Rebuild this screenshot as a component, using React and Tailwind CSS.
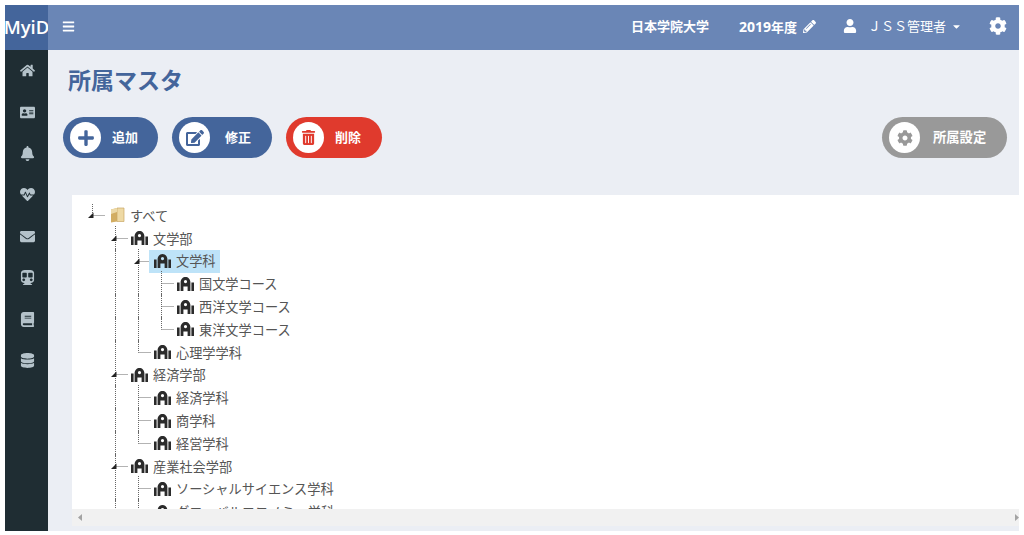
import {
  FaHome, FaAddressCard, FaBell, FaHeartbeat, FaEnvelope, FaSubway, FaBook, FaDatabase,
  FaBars, FaPencilAlt, FaUser, FaCaretDown, FaCog, FaPlus, FaEdit, FaTrashAlt,
} from 'react-icons/fa';

const sideIcons = [FaHome, FaAddressCard, FaBell, FaHeartbeat, FaEnvelope, FaSubway, FaBook, FaDatabase];

// guides: b = blank, p = vertical line. type: open / root / tee / last
const treeRows = [
  { label: 'すべて', guides: [], type: 'root', folder: true },
  { label: '文学部', guides: ['b'], type: 'open' },
  { label: '文学科', guides: ['b', 'p'], type: 'open', selected: true },
  { label: '国文学コース', guides: ['b', 'p', 'p'], type: 'tee' },
  { label: '西洋文学コース', guides: ['b', 'p', 'p'], type: 'tee' },
  { label: '東洋文学コース', guides: ['b', 'p', 'p'], type: 'last' },
  { label: '心理学学科', guides: ['b', 'p'], type: 'last' },
  { label: '経済学部', guides: ['b'], type: 'open' },
  { label: '経済学科', guides: ['b', 'p'], type: 'tee' },
  { label: '商学科', guides: ['b', 'p'], type: 'tee' },
  { label: '経営学科', guides: ['b', 'p'], type: 'last' },
  { label: '産業社会学部', guides: ['b'], type: 'open' },
  { label: 'ソーシャルサイエンス学科', guides: ['b', 'p'], type: 'tee' },
  { label: 'グローバルエコノミー学科', guides: ['b', 'p'], type: 'tee' },
];

function Connector({ type }) {
  const dots = { stroke: '#666', strokeWidth: 1, strokeDasharray: '1 1' };
  return (
    <svg width="23" height="23" className="shrink-0 overflow-visible">
      {type === 'p' && <line x1="8.5" y1="-1" x2="8.5" y2="24" {...dots} />}
      {type === 'tee' && <line x1="8.5" y1="-1" x2="8.5" y2="24" {...dots} />}
      {type === 'last' && <line x1="8.5" y1="-1" x2="8.5" y2="11.5" {...dots} />}
      {type === 'open' && <line x1="8.5" y1="-1" x2="8.5" y2="24" {...dots} />}
      {type === 'root' && <line x1="8.5" y1="0" x2="8.5" y2="11.5" {...dots} />}
      {type !== 'b' && type !== 'p' && <line x1="8.5" y1="11.5" x2="21" y2="11.5" {...dots} />}
      {(type === 'open' || type === 'root') && <path d="M4 14 L9.5 8.5 V14 Z" fill="#222" />}
    </svg>
  );
}

function BuildingIcon() {
  return (
    <svg width="17" height="14" viewBox="0 0 17 14" className="shrink-0">
      <rect x="0" y="5.5" width="2.6" height="8.5" fill="#2b2b2b" />
      <rect x="14.4" y="5.5" width="2.6" height="8.5" fill="#2b2b2b" />
      <path
        fillRule="evenodd"
        d="M3.6 14 V5.5 C3.6 2 6 0 8.5 0 C11 0 13.4 2 13.4 5.5 V14 H10.6 V9.5 H6.4 V14 Z M8.5 3 A1.6 1.6 0 1 0 8.5 6.2 A1.6 1.6 0 1 0 8.5 3 Z"
        fill="#2b2b2b"
      />
    </svg>
  );
}

function FolderIcon() {
  return (
    <svg width="17" height="16" viewBox="0 0 17 16" className="shrink-0">
      <path d="M3 2.5 L9 1 V14.5 L3 15.5 Z" fill="#d2ad62" />
      <path d="M9 1 H16 V14.5 H9 Z" fill="#eed9a4" stroke="#c9a865" strokeWidth="0.7" />
      <path d="M3 2.5 L9 1 V5 L3 7 Z" fill="#ecd9a8" />
    </svg>
  );
}

function TreeRow({ row }) {
  return (
    <div className="flex items-center h-[22.8px] shrink-0">
      {row.guides.map((g, i) => (
        <Connector key={i} type={g} />
      ))}
      <Connector type={row.type} />
      <div className={`flex items-center h-[23px] pr-1 ${row.selected ? 'bg-[#bee3f8] -ml-[4px] pl-[5px]' : 'pl-px'}`}>
        {row.folder ? <FolderIcon /> : <BuildingIcon />}
        <span className="ml-[5px] text-[13.2px] leading-none text-[#555] whitespace-nowrap">{row.label}</span>
      </div>
    </div>
  );
}

function PillButton({ icon: Icon, label, bg, fg, width, gap, iconSize, textSize = 'text-[13px]' }) {
  return (
    <button className={`flex items-center h-[41px] rounded-full pl-[7px] ${bg} ${width}`}>
      <span className={`flex items-center justify-center w-[31px] h-[31px] rounded-full bg-white ${fg}`}>
        <Icon size={iconSize} />
      </span>
      <span className={`pb-[2px] font-bold text-white whitespace-nowrap ${textSize} ${gap}`}>{label}</span>
    </button>
  );
}

export default function App() {
  return (
    <div className="h-[535px] overflow-hidden bg-white pt-[5px] pl-[5px] pr-[5px] pb-[4px] font-['Noto_Sans_CJK_JP','Liberation_Sans',sans-serif]">
      <div className="flex h-full">
        {/* サイドバー */}
        <div className="w-[43px] shrink-0 flex flex-col bg-[#1f2d33]">
          <div className="h-[45px] shrink-0 flex items-center justify-center overflow-hidden pb-[2px] bg-[#44659b] text-white text-[18.5px] font-semibold font-['Open_Sans',sans-serif]">
            MyiD
          </div>
          <div className="flex flex-col">
            {sideIcons.map((Icon, i) => (
              <div key={i} className="h-[41.4px] flex items-center justify-center pl-[2px] text-[#b4c2ca]">
                <Icon size={15} />
              </div>
            ))}
          </div>
        </div>

        <div className="flex-1 min-w-0 flex flex-col bg-[#ebeef4]">
          {/* ヘッダー */}
          <div className="h-[45px] shrink-0 flex items-center pb-[3px] bg-[#6a86b6] text-white">
            <FaBars size={13} className="ml-[14px]" />
            <div className="ml-auto flex items-center text-[13px] font-bold">
              <span>日本学院大学</span>
              <span className="ml-[30px] text-[14px] font-['Open_Sans','Noto_Sans_CJK_JP',sans-serif]">2019<span className="text-[13px] font-['Noto_Sans_CJK_JP']">年度</span></span>
              <FaPencilAlt size={13} className="ml-[6px]" />
              <FaUser size={14} className="ml-[27px]" />
              <span className="ml-[11px] font-normal">ＪＳＳ管理者</span>
              <FaCaretDown size={11} className="ml-[5px]" />
              <FaCog size={18} className="ml-[27px] mr-[12px]" />
            </div>
          </div>

          {/* タイトル */}
          <div className="h-[67px] shrink-0 flex items-center pl-[20px] pb-[9px] text-[23px] font-bold text-[#44659b]">
            所属マスタ
          </div>

          {/* ボタン */}
          <div className="h-[41px] shrink-0 flex items-center pl-[15px] pr-[12px]">
            <PillButton icon={FaPlus} label="追加" bg="bg-[#44659b]" fg="text-[#44659b]" width="w-[95px]" gap="ml-[11px]" iconSize={18} />
            <PillButton icon={FaEdit} label="修正" bg="bg-[#44659b] ml-[14px]" fg="text-[#44659b]" width="w-[100px]" gap="ml-[15px]" iconSize={18} />
            <PillButton icon={FaTrashAlt} label="削除" bg="bg-[#e03a2d] ml-[14px]" fg="text-[#e03a2d]" width="w-[96px]" gap="ml-[11px]" iconSize={15} />
            <div className="ml-auto">
              <PillButton icon={FaCog} label="所属設定" bg="bg-[#999999]" fg="text-[#999999]" width="w-[125px]" gap="ml-[13px]" iconSize={16} textSize="text-[13.3px]" />
            </div>
          </div>

          {/* ツリー */}
          <div className="mt-[37px] ml-[24px] flex-1 min-h-0 flex flex-col">
            <div className="flex-1 min-h-0 overflow-hidden bg-white pl-[12px] pt-[9px] flex flex-col">
              {treeRows.map((row) => (
                <TreeRow key={row.label} row={row} />
              ))}
            </div>
            <div className="h-[17px] shrink-0 flex items-center justify-between pl-[6px] pr-[0px] bg-[#f1f1f1]">
              <svg width="4" height="7" viewBox="0 0 4 7"><path d="M4 0 V7 L0 3.5 Z" fill="#a3a3a3" /></svg>
              <svg width="4" height="7" viewBox="0 0 4 7"><path d="M0 0 V7 L4 3.5 Z" fill="#a3a3a3" /></svg>
            </div>
            <div className="h-[5px] shrink-0" />
          </div>
        </div>
      </div>
    </div>
  );
}
